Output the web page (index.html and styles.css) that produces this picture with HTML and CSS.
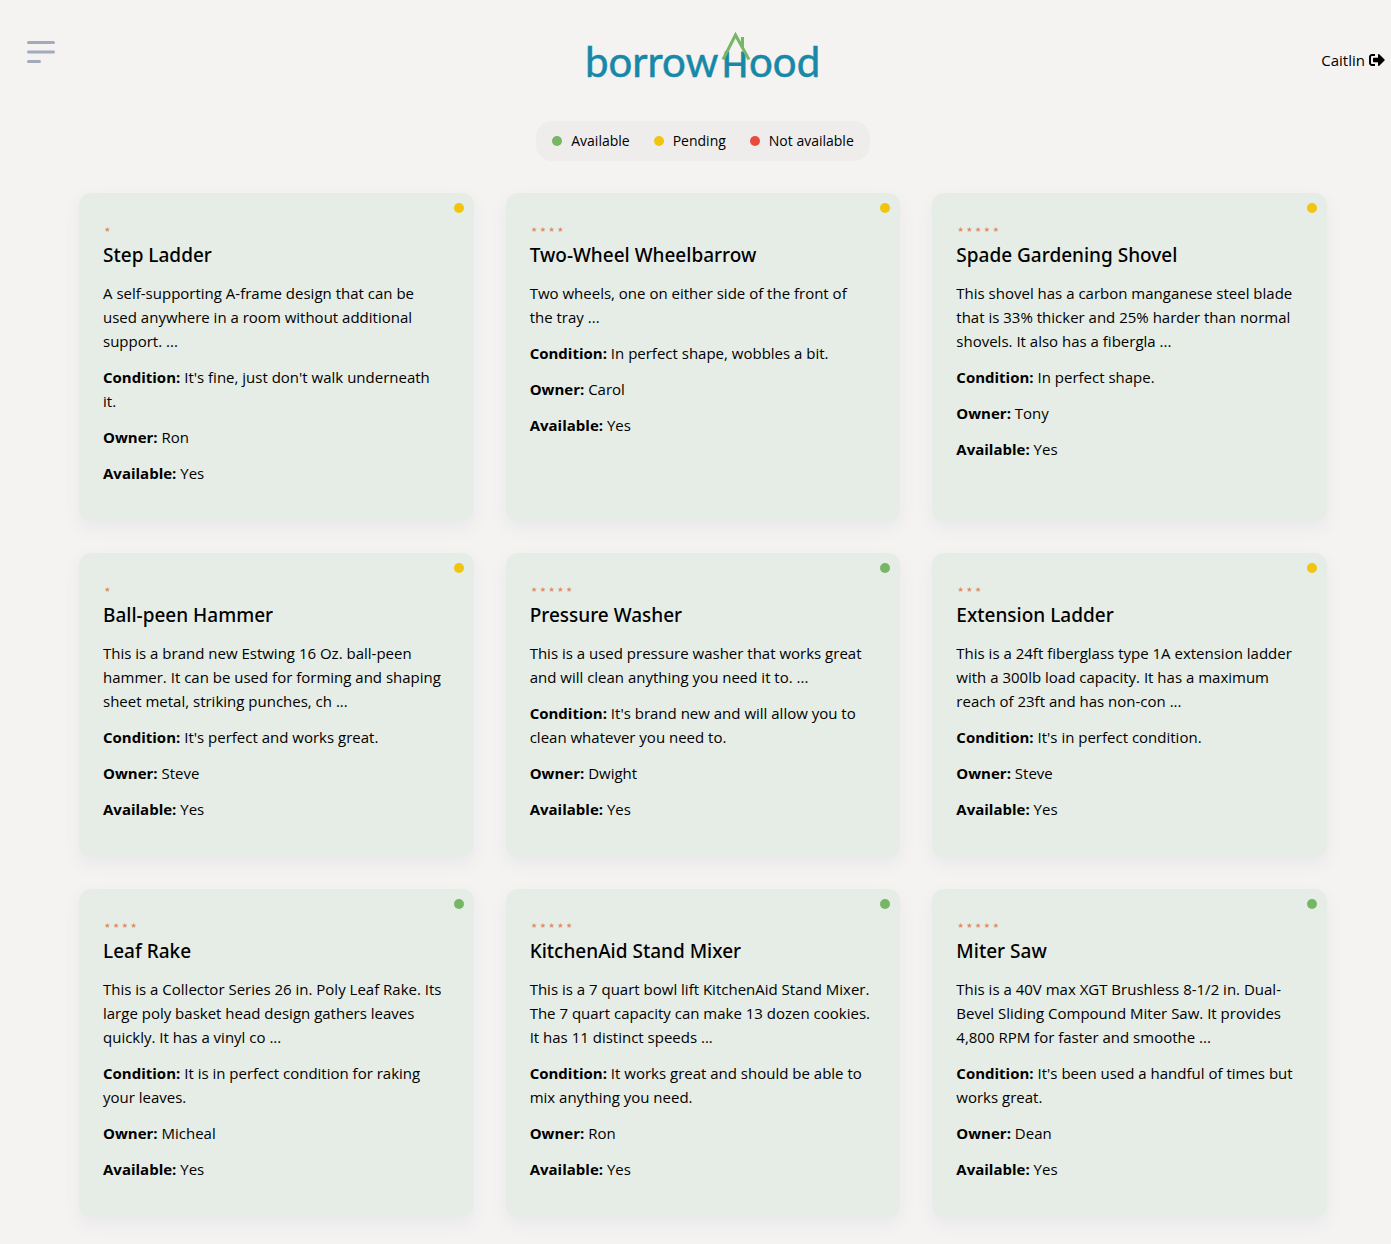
FILE: index.html
```html
<!DOCTYPE html>
<html lang="en">
<head>
<meta charset="utf-8">
<meta name="viewport" content="width=device-width, initial-scale=1">
<title>borrowHood</title>
<link rel="stylesheet" href="styles.css">
</head>
<body>
<header class="topbar">
  <div class="side">
    <button class="menu" type="button" aria-label="Open menu">
      <svg viewBox="0 0 32 24" width="32" height="24" aria-hidden="true"><path d="M3.500 2.500h25M3.500 12h25M3.500 21.500h11"/></svg>
    </button>
  </div>
  <a class="logo" href="#" aria-label="borrowHood home">
    <svg viewBox="0 0 240 68" width="240" height="68">
      <g class="word">
        <text x="0" y="50" font-size="42">borrow</text>
        <text class="cap" x="137" y="50" font-size="34">H</text>
        <text x="164" y="50" font-size="42">ood</text>
      </g>
      <path class="roof" d="M138 32.500 150.500 8 164 32.500M157.500 20V10"/>
    </svg>
  </a>
  <div class="side end">
    <a class="user" href="#">Caitlin
      <svg viewBox="0 0 512 512" width="16" height="16" role="img" aria-label="Sign out"><path d="M497 273L329 441c-15 15-41 4.500-41-17v-96H152c-13.300 0-24-10.700-24-24v-96c0-13.300 10.700-24 24-24h136V88c0-21.400 25.900-32 41-17l168 168c9.300 9.400 9.300 24.600 0 34zM192 436v-40c0-6.600-5.400-12-12-12H96c-17.700 0-32-14.300-32-32V160c0-17.700 14.300-32 32-32h84c6.600 0 12-5.400 12-12V76c0-6.600-5.400-12-12-12H96c-53 0-96 43-96 96v192c0 53 43 96 96 96h84c6.600 0 12-5.400 12-12z"/></svg></a>
  </div>
</header>
<ul class="legend">
  <li><span class="dot green"></span>Available</li>
  <li><span class="dot yellow"></span>Pending</li>
  <li><span class="dot red"></span>Not available</li>
</ul>
<main class="grid">
  <article class="card"><span class="dot yellow status"></span>
    <div class="stars">⋆</div><h2>Step Ladder</h2>
    <p>A self-supporting A-frame design that can be used anywhere in a room without additional support. ...</p>
    <p><b>Condition:</b> It's fine, just don't walk underneath<br>it.</p>
    <p><b>Owner:</b> Ron</p><p><b>Available:</b> Yes</p></article>
  <article class="card"><span class="dot yellow status"></span>
    <div class="stars">⋆⋆⋆⋆</div><h2>Two-Wheel Wheelbarrow</h2>
    <p>Two wheels, one on either side of the front of<br>the tray ...</p>
    <p><b>Condition:</b> In perfect shape, wobbles a bit.</p>
    <p><b>Owner:</b> Carol</p><p><b>Available:</b> Yes</p></article>
  <article class="card"><span class="dot yellow status"></span>
    <div class="stars">⋆⋆⋆⋆⋆</div><h2>Spade Gardening Shovel</h2>
    <p>This shovel has a carbon manganese steel blade that is 33% thicker and 25% harder than normal shovels. It also has a fibergla ...</p>
    <p><b>Condition:</b> In perfect shape.</p>
    <p><b>Owner:</b> Tony</p><p><b>Available:</b> Yes</p></article>
  <article class="card"><span class="dot yellow status"></span>
    <div class="stars">⋆</div><h2>Ball-peen Hammer</h2>
    <p>This is a brand new Estwing 16 Oz. ball-peen hammer. It can be used for forming and shaping sheet metal, striking punches, ch ...</p>
    <p><b>Condition:</b> It's perfect and works great.</p>
    <p><b>Owner:</b> Steve</p><p><b>Available:</b> Yes</p></article>
  <article class="card"><span class="dot green status"></span>
    <div class="stars">⋆⋆⋆⋆⋆</div><h2>Pressure Washer</h2>
    <p>This is a used pressure washer that works great and will clean anything you need it to. ...</p>
    <p><b>Condition:</b> It's brand new and will allow you to clean whatever you need to.</p>
    <p><b>Owner:</b> Dwight</p><p><b>Available:</b> Yes</p></article>
  <article class="card"><span class="dot yellow status"></span>
    <div class="stars">⋆⋆⋆</div><h2>Extension Ladder</h2>
    <p>This is a 24ft fiberglass type 1A extension ladder with a 300lb load capacity. It has a maximum reach of 23ft and has non-con ...</p>
    <p><b>Condition:</b> It's in perfect condition.</p>
    <p><b>Owner:</b> Steve</p><p><b>Available:</b> Yes</p></article>
  <article class="card"><span class="dot green status"></span>
    <div class="stars">⋆⋆⋆⋆</div><h2>Leaf Rake</h2>
    <p>This is a Collector Series 26 in. Poly Leaf Rake. Its large poly basket head design gathers leaves quickly. It has a vinyl co ...</p>
    <p><b>Condition:</b> It is in perfect condition for raking your leaves.</p>
    <p><b>Owner:</b> Micheal</p><p><b>Available:</b> Yes</p></article>
  <article class="card"><span class="dot green status"></span>
    <div class="stars">⋆⋆⋆⋆⋆</div><h2>KitchenAid Stand Mixer</h2>
    <p>This is a 7 quart bowl lift KitchenAid Stand Mixer. The 7 quart capacity can make 13 dozen cookies. It has 11 distinct speeds ...</p>
    <p><b>Condition:</b> It works great and should be able to mix anything you need.</p>
    <p><b>Owner:</b> Ron</p><p><b>Available:</b> Yes</p></article>
  <article class="card"><span class="dot green status"></span>
    <div class="stars">⋆⋆⋆⋆⋆</div><h2>Miter Saw</h2>
    <p>This is a 40V max XGT Brushless 8-1/2 in. Dual-Bevel Sliding Compound Miter Saw. It provides 4,800 RPM for faster and smoothe ...</p>
    <p><b>Condition:</b> It's been used a handful of times but works great.</p>
    <p><b>Owner:</b> Dean</p><p><b>Available:</b> Yes</p></article>
</main>
</body>
</html>
```
FILE: styles.css
```css
* { box-sizing: border-box; margin: 0; padding: 0; }

body {
  padding-left: 15px;
  background: #f4f3f1;
  color: #000;
  font: 400 15px/24px "Open Sans", "Noto Sans", sans-serif;
}

a { color: inherit; text-decoration: none; }
svg { display: block; }

.topbar {
  display: grid;
  grid-template-columns: 1fr auto 1fr;
  align-items: start;
  min-height: 121px;
  padding: 27px 6px 0 10px;
}
.side { display: flex; padding-top: 13px; }
.end { justify-content: flex-end; padding-top: 21px; }
.menu { background: none; border: 0; cursor: pointer; }
.menu path { fill: none; stroke: #a3aabb; stroke-width: 3; stroke-linecap: round; }
.word { fill: #1788a8; stroke: #1788a8; stroke-width: 0.5; font-family: Lato, sans-serif; font-weight: 400; }
.cap { stroke-width: 1; }
.roof { fill: none; stroke: #76b665; stroke-width: 3; }
.user { display: flex; align-items: center; gap: 4px; }

.legend {
  display: flex;
  gap: 24px;
  width: fit-content;
  margin: 0 auto 32px;
  padding: 8px 16px;
  border-radius: 16px;
  background: #eeedeb;
  list-style: none;
  font-size: 14px;
}
.legend li { display: flex; align-items: center; gap: 9px; }

.dot { flex: none; width: 10px; height: 10px; border-radius: 50%; }
.green { background: #76b665; }
.yellow { background: #f1c40f; }
.red { background: #e74c3c; }

.grid {
  display: grid;
  grid-template-columns: repeat(3, 1fr);
  gap: 32px;
  max-width: 1280px;
  margin: 0 auto;
  padding: 0 16px 27px;
}
.card {
  position: relative;
  padding: 24px;
  border-radius: 12px;
  background: #e6ede6;
  box-shadow: 0 7px 16px rgba(130, 120, 200, 0.09);
}
.status { position: absolute; top: 10px; right: 10px; }
.stars { color: #e58a60; font: 14px/24px "DejaVu Sans", sans-serif; }
h2 { margin-bottom: 12px; font: 500 19px/28px "Noto Sans", sans-serif; }
p { margin-bottom: 12px; }
b { font-weight: 700; }
```
